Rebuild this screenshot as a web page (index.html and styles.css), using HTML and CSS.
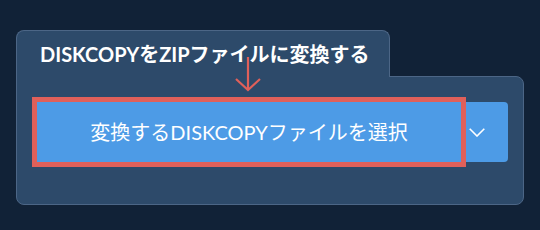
FILE: index.html
```html
<!DOCTYPE html>
<html lang="ja">
<head>
    <meta charset="UTF-8">
    <title>DISKCOPYをZIPファイルに変換する</title>
    <link rel="stylesheet" href="styles.css">
</head>
<body>
    <div class="converter">
        <div class="tab">DISKCOPYをZIPファイルに変換する</div>
        <div class="panel">
            <div class="picker">
                <button class="pick-main">変換するDISKCOPYファイルを選択</button>
                <button class="pick-more">
                    <svg width="16" height="9" viewBox="0 0 16 9"><path d="M0.7 0.7 L8 8 L15.3 0.7" fill="none" stroke="#fff" stroke-width="1.6"/></svg>
                </button>
            </div>
        </div>
        <svg class="hint-arrow" width="26" height="36" viewBox="0 0 26 36">
            <path d="M13 0 V32 M1 22 L13 33 L25 22" fill="none" stroke="#e0605a" stroke-width="2.2"/>
        </svg>
    </div>
</body>
</html>
```

FILE: styles.css
```css
body {
    margin: 0;
    background: #112237;
    font-family: Lato, "Noto Sans CJK JP", sans-serif;
    color: #fff;
}
.converter {
    position: relative;
    width: 508px;
    margin: 30px 0 0 16px;
}
.tab {
    position: relative;
    z-index: 1;
    width: 348px;
    height: 24px;
    padding: 11px 1px 11px 23px;
    margin-bottom: -1px;
    background: #2d4a6a;
    border: 1px solid #4c6686;
    border-bottom: none;
    border-radius: 8px 8px 0 0;
    font-size: 20px;
    font-weight: bold;
    line-height: 24px;
    white-space: nowrap;
}
.panel {
    background: #2d4a6a;
    border: 1px solid #4c6686;
    border-radius: 0 8px 8px 8px;
    padding: 20px 15px 37px 15px;
}
.picker {
    display: flex;
    margin: 5px;
    width: 471px;
}
.picker button {
    border: none;
    background: #4d9be6;
    color: #fff;
    font-family: inherit;
    height: 60px;
    padding: 0;
}
.pick-main {
    flex: 1;
    outline: 5px solid #e0605a;
    font-size: 20px;
    line-height: 24px;
    position: relative;
    z-index: 1;
}
.pick-more {
    width: 47px;
    border-radius: 0 4px 4px 0;
    display: flex;
    align-items: center;
    justify-content: flex-start;
    padding-left: 8px !important;
}
.pick-more svg {
    display: block;
    margin-top: 1px;
}
.hint-arrow {
    position: absolute;
    left: 219px;
    top: 27px;
    z-index: 2;
}
```
